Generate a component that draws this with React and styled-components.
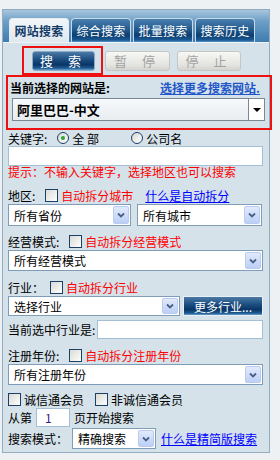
import React from "react";
import styled, { createGlobalStyle } from "styled-components";

const Global = createGlobalStyle`
  html, body { margin: 0; padding: 0; background: #eef1f4; }
  body { font-family: "Noto Sans CJK SC", "Noto Sans", sans-serif; font-size: 12px; color: #000; }
  * { box-sizing: border-box; }
`;

const Panel = styled.div`
  margin: 9px 0 0 2px;
  width: 268px;
  border: 1px solid #90adc2;
  background: #d5e2ea;
  padding-bottom: 3px;
`;

const TabBar = styled.div`
  height: 33px;
  padding: 8px 0 0 6px;
  display: flex;
  gap: 2px;
  background: linear-gradient(to bottom, #a8c6dc 0%, #6d9fc6 35%, #3e7cb0 100%);
  border-bottom: 1px solid #eef3f6;
`;

const Tab = styled.div`
  width: 60px;
  height: 24px;
  border: 1px solid ${(p) => (p.$active ? "#e5edf3" : "#c6d9e8")};
  border-bottom: none;
  border-radius: 4px 4px 0 0;
  display: flex;
  align-items: center;
  justify-content: center;
  font-size: 12px;
  letter-spacing: 0.3px;
  line-height: 1;
  font-weight: ${(p) => (p.$active ? 700 : 400)};
  color: ${(p) => (p.$active ? "#143a66" : "#ffffff")};
  background: ${(p) =>
    p.$active
      ? "linear-gradient(to bottom, #f2f6f9, #dfe8ef)"
      : "linear-gradient(to bottom, #4a80b0 0%, #245b8d 45%, #0d3e70 70%, #1a5a94 92%, #5a98c8 100%)"};
`;

const ButtonRow = styled.div`
  display: flex;
  align-items: center;
  padding-left: 19px;
  margin-top: 3px;
  height: 29px;
  gap: 2px;
`;

const Highlight = styled.div`
  width: 81px;
  height: 29px;
  border: 2px solid #ee1111;
  display: flex;
  align-items: center;
  padding-left: 8px;
`;

const NavyButton = styled.div`
  width: ${(p) => p.$w}px;
  height: 20px;
  border: 1px solid #8aabc8;
  border-radius: 3px;
  display: flex;
  align-items: center;
  justify-content: center;
  color: #fff;
  font-size: 13px;
  letter-spacing: ${(p) => p.$ls || 0}px;
  background: linear-gradient(to bottom, #4c7aa6 0%, #1d4f82 40%, #0a3566 70%, #1e5b92 90%, #6aa0cc 100%);
`;

const GrayButton = styled.div`
  width: ${(p) => p.$w}px;
  height: 20px;
  border: 1px solid #c6c6c2;
  border-radius: 3px;
  display: flex;
  align-items: center;
  justify-content: center;
  color: #a2a2a2;
  font-size: 13px;
  letter-spacing: 6px;
  background: linear-gradient(to bottom, #f7f7f5, #e4e4e0 70%, #d4d4d0);
  margin-left: ${(p) => p.$ml || 0}px;
`;

const SiteBox = styled.div`
  margin-left: 3px;
  width: 266px;
  height: 55px;
  border: 2px solid #ee1111;
  padding: 0 5px 0 2px;
`;

const SiteTitle = styled.div`
  height: 20px;
  display: flex;
  align-items: center;
  justify-content: space-between;
  font-weight: 700;
  margin-bottom: 1px;
`;

const StrongLink = styled.a`
  color: #2256c8;
  font-weight: 700;
  text-decoration: underline;
  margin-right: 5px;
`;

const SiteSelect = styled.div`
  height: 23px;
  margin-left: 2px;
  border: 1px solid #7b8794;
  background: linear-gradient(to bottom, #f7f9fb, #e8edf1);
  display: flex;
  align-items: stretch;
  font-weight: 700;
  font-size: 13px;
`;

const SiteValue = styled.div`
  flex: 1;
  display: flex;
  align-items: center;
  padding-left: 4px;
`;

const BlackArrow = styled.div`
  width: 16px;
  border-left: 1px solid #7b8794;
  background: #fff;
  display: flex;
  align-items: center;
  justify-content: center;
  &::after {
    content: "";
    border-left: 4px solid transparent;
    border-right: 4px solid transparent;
    border-top: 4px solid #000;
  }
`;

const Body = styled.div`
  padding-left: 5px;
`;

const Row = styled.div`
  display: flex;
  align-items: center;
  height: ${(p) => p.$h || 18}px;
  margin-top: ${(p) => p.$mt || 0}px;
  gap: ${(p) => p.$gap || 0}px;
  white-space: nowrap;
`;

const Label = styled.span`
  margin-right: ${(p) => p.$mr || 0}px;
  margin-left: ${(p) => p.$ml || 0}px;
  width: ${(p) => (p.$w ? p.$w + "px" : "auto")};
`;

const Red = styled.span`
  color: #ff0000;
  margin-left: ${(p) => p.$ml || 0}px;
`;

const Link = styled.a`
  color: #0000ff;
  text-decoration: underline;
  margin-left: ${(p) => p.$ml || 0}px;
`;

const Check = styled.span`
  width: 13px;
  height: 13px;
  border: 1px solid #1c3f66;
  background: linear-gradient(135deg, #d9d9d4, #ffffff);
  margin-right: ${(p) => p.$mr || 3}px;
  flex: none;
`;

const Radio = styled.span`
  width: 12px;
  height: 12px;
  border-radius: 50%;
  border: 1px solid #1c3f66;
  background: linear-gradient(135deg, #d8d8d4, #ffffff);
  margin-right: 3px;
  margin-left: ${(p) => p.$ml || 0}px;
  display: inline-flex;
  align-items: center;
  justify-content: center;
  flex: none;
  &::after {
    content: "";
    width: 4px;
    height: 4px;
    border-radius: 50%;
    background: ${(p) => (p.$on ? "#2ea52e" : "transparent")};
  }
`;

const TextInput = styled.div`
  width: ${(p) => (p.$w ? p.$w + "px" : "255px")};
  height: ${(p) => p.$h || 20}px;
  margin-top: ${(p) => p.$mt || 0}px;
  border: 1px solid #a3bfd6;
  background: #fff;
  display: flex;
  align-items: center;
  padding-left: 8px;
  font-size: 12px;
  color: #3a1a8a;
  flex: none;
`;

const Hint = styled.div`
  color: #ff0000;
  height: 12px;
  line-height: 12px;
`;

const Select = styled.div`
  width: ${(p) => p.$w}px;
  height: ${(p) => p.$h || 21}px;
  margin-top: ${(p) => p.$mt || 0}px;
  border: 1px solid #7f9db9;
  background: #fff;
  display: flex;
  align-items: center;
  padding: 1px;
  flex: none;
`;

const SelectText = styled.span`
  flex: 1;
  padding-left: 4px;
  font-size: 12px;
`;

const Chevron = styled.span`
  width: 16px;
  align-self: stretch;
  border: 1px solid #b9cbef;
  border-radius: 2px;
  background: linear-gradient(to bottom, #e1eafc, #bccff6);
  display: flex;
  align-items: center;
  justify-content: center;
`;

function Dropdown({ w, h, mt, children }) {
  return (
    <Select $w={w} $h={h} $mt={mt}>
      <SelectText>{children}</SelectText>
      <Chevron>
        <svg width="8" height="6" viewBox="0 0 8 6">
          <path d="M1 1.5 L4 4.5 L7 1.5" fill="none" stroke="#4a5f86" strokeWidth="1.8" />
        </svg>
      </Chevron>
    </Select>
  );
}

const MoreButton = styled(NavyButton)`
  border-color: #e8f0f6;
  border-radius: 1px;
  font-size: 12px;
`;

export default function App() {
  return (
    <>
      <Global />
      <Panel>
        <TabBar>
          <Tab $active>网站搜索</Tab>
          <Tab>综合搜索</Tab>
          <Tab>批量搜索</Tab>
          <Tab>搜索历史</Tab>
        </TabBar>
        <ButtonRow>
          <Highlight>
            <NavyButton $w={63} $ls={6}>搜 索</NavyButton>
          </Highlight>
          <GrayButton $w={65}>暂 停</GrayButton>
          <GrayButton $w={64} $ml={5}>停 止</GrayButton>
        </ButtonRow>
        <SiteBox>
          <SiteTitle>
            <span>当前选择的网站是:</span>
            <StrongLink>选择更多搜索网站.</StrongLink>
          </SiteTitle>
          <SiteSelect>
            <SiteValue>阿里巴巴-中文</SiteValue>
            <BlackArrow />
          </SiteSelect>
        </SiteBox>
        <Body>
          <Row $h={16}>
            <Label $mr={10}>关键字:</Label>
            <Radio $on />
            <Label $w={59}>全 部</Label>
            <Radio />
            <span>公司名</span>
          </Row>
          <TextInput />
          <Hint>提示：不输入关键字，选择地区也可以搜索</Hint>
          <Row $mt={8}>
            <Label $mr={10}>地区:</Label>
            <Check />
            <Red>自动拆分城市</Red>
            <Link $ml={12}>什么是自动拆分</Link>
          </Row>
          <Row $h={22} $gap={6}>
            <Dropdown w={123} h={22}>所有省份</Dropdown>
            <Dropdown w={125} h={22}>所有城市</Dropdown>
          </Row>
          <Row $mt={6}>
            <Label $mr={10}>经营模式:</Label>
            <Check />
            <Red>自动拆分经营模式</Red>
          </Row>
          <Dropdown w={255}>所有经营模式</Dropdown>
          <Row $mt={7}>
            <Label $mr={6}>行业：</Label>
            <Check />
            <Red>自动拆分行业</Red>
          </Row>
          <Row $h={20} $gap={3}>
            <Dropdown w={172} h={20}>选择行业</Dropdown>
            <MoreButton $w={80}>更多行业...</MoreButton>
          </Row>
          <Row $h={19} $mt={4}>
            <Label $mr={2}>当前选中行业是:</Label>
            <TextInput $w={166} $h={19} />
          </Row>
          <Row $mt={7}>
            <Label $mr={10}>注册年份:</Label>
            <Check />
            <Red>自动拆分注册年份</Red>
          </Row>
          <Dropdown w={255}>所有注册年份</Dropdown>
          <Row $mt={6} $h={17}>
            <Check />
            <Label $w={71}>诚信通会员</Label>
            <Check />
            <span>非诚信通会员</span>
          </Row>
          <Row $h={19}>
            <Label $mr={4}>从第</Label>
            <TextInput $w={34} $h={19}>1</TextInput>
            <Label $ml={4}>页开始搜索</Label>
          </Row>
          <Row $h={21} $mt={1}>
            <Label $w={64}>搜索模式：</Label>
            <Dropdown w={84}>精确搜索</Dropdown>
            <Link $ml={5}>什么是精简版搜索</Link>
          </Row>
        </Body>
      </Panel>
    </>
  );
}
